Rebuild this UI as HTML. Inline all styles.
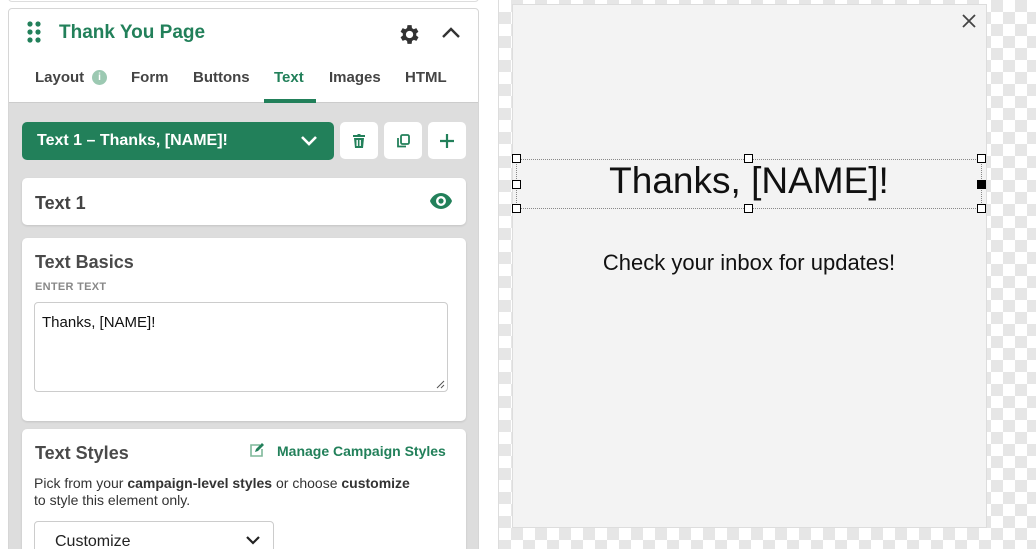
<!DOCTYPE html>
<html><head><style>
*{box-sizing:border-box;margin:0;padding:0}
html,body{width:1036px;height:549px;overflow:hidden}
body{background:#fff;font-family:"Liberation Sans",sans-serif;position:relative}
.abs{position:absolute}
.right{left:498px;top:0;width:538px;height:549px;border-left:1px solid #ddd;
background-color:#fff;background-image:linear-gradient(45deg,#e6e6e6 25%,transparent 25%,transparent 75%,#e6e6e6 75%),linear-gradient(45deg,#e6e6e6 25%,transparent 25%,transparent 75%,#e6e6e6 75%);background-size:24px 24px;background-position:0 0,12px 12px}
.pop{left:512px;top:4px;width:475px;height:524px;background:#f3f3f3;border:1px solid #ddd}
.h{width:9px;height:9px;border:1px solid #000;background:#fff}
.card{background:#fff;border-radius:5px;box-shadow:0 1px 2px rgba(0,0,0,.12)}
.tab{top:69px;font-size:15px;font-weight:bold;color:#444}
.ib{background:#fff;border-radius:5px;width:38px;height:37px;display:flex;align-items:center;justify-content:center}
</style></head><body>
<div class="abs" style="left:8px;top:-10px;width:471px;height:12px;border:1px solid #ddd;border-radius:4px"></div>
<div class="abs" style="left:8px;top:8px;width:471px;height:545px;border:1px solid #d6d6d6;border-radius:4px;background:#ddd;overflow:hidden">
 <div class="abs" style="left:0;top:0;width:471px;height:94px;background:#fff;border-bottom:1px solid #ccc"></div>
</div>
<svg class="abs" style="left:27px;top:21px" width="14" height="22"><g fill="#22805a"><circle cx="3" cy="3" r="2.6"/><circle cx="11" cy="3" r="2.6"/><circle cx="3" cy="11" r="2.6"/><circle cx="11" cy="11" r="2.6"/><circle cx="3" cy="19" r="2.6"/><circle cx="11" cy="19" r="2.6"/></g></svg>
<div class="abs" style="left:59px;top:22px;font-size:19px;font-weight:bold;color:#22805a">Thank You Page</div>
<svg class="abs" style="left:396px;top:22px" width="25" height="25" viewBox="0 0 24 24"><path fill="#333" d="M19.4 13a7.5 7.5 0 000-2l2.1-1.6-2-3.5-2.5 1a7 7 0 00-1.7-1L15 3h-4l-.4 2.9a7 7 0 00-1.7 1l-2.5-1-2 3.5L6.6 11a7.5 7.5 0 000 2l-2.2 1.6 2 3.5 2.5-1a7 7 0 001.7 1L11 21h4l.4-2.9a7 7 0 001.7-1l2.5 1 2-3.5zM13 15.5a3.5 3.5 0 110-7 3.5 3.5 0 010 7z"/></svg>
<svg class="abs" style="left:441px;top:25px" width="20" height="14"><path d="M2 12L10 4l8 8" stroke="#333" stroke-width="2.4" fill="none"/></svg>
<div class="abs tab" style="left:35px">Layout</div>
<div class="abs" style="left:92px;top:70px;width:15px;height:15px;border-radius:50%;background:#9cc9b2;color:#fff;font-size:10px;font-weight:bold;text-align:center;line-height:15px">i</div>
<div class="abs tab" style="left:131px">Form</div>
<div class="abs tab" style="left:193px">Buttons</div>
<div class="abs tab" style="left:274px;color:#22805a">Text</div>
<div class="abs" style="left:264px;top:99px;width:52px;height:4px;background:#22805a"></div>
<div class="abs tab" style="left:329px">Images</div>
<div class="abs tab" style="left:405px">HTML</div>

<div class="abs" style="left:22px;top:122px;width:312px;height:38px;background:#22805a;border-radius:5px;color:#fff;font-size:16px;font-weight:bold;padding:10px 0 0 15px">Text 1 – Thanks, [NAME]!</div>
<svg class="abs" style="left:300px;top:135px" width="18" height="12"><path d="M2 2l7 7 7-7" stroke="#fff" stroke-width="2.6" fill="none"/></svg>
<div class="abs ib" style="left:340px;top:122px"><svg width="14" height="16" viewBox="0 0 14 16"><path fill="#22805a" d="M1 2h4l1-1h2l1 1h4v2H1zM2 5h10l-1 10H3zm2.5 2v6h1.4V7zm3 0v6h1.4V7z"/></svg></div>
<div class="abs ib" style="left:384px;top:122px"><svg width="16" height="16" viewBox="0 0 16 16" fill="none" stroke="#22805a" stroke-width="1.8"><rect x="6" y="2" width="8" height="9" rx="1.5"/><path d="M3 5v8.5h8"/></svg></div>
<div class="abs ib" style="left:428px;top:122px"><svg width="14" height="14"><path d="M7 0v14M0 7h14" stroke="#22805a" stroke-width="2.2"/></svg></div>

<div class="abs card" style="left:22px;top:178px;width:444px;height:47px"></div>
<div class="abs" style="left:35px;top:193px;font-size:18px;font-weight:bold;color:#444">Text 1</div>
<svg class="abs" style="left:429px;top:192px" width="24" height="18" viewBox="0 0 24 18"><path fill="#22805a" d="M12 1C6 1 2 6 1 9c1 3 5 8 11 8s10-5 11-8c-1-3-5-8-11-8zm0 13a5 5 0 110-10 5 5 0 010 10z"/><circle cx="12" cy="9" r="2.6" fill="#22805a"/></svg>

<div class="abs card" style="left:22px;top:238px;width:444px;height:183px"></div>
<div class="abs" style="left:35px;top:252px;font-size:18px;font-weight:bold;color:#4a4a4a">Text Basics</div>
<div class="abs" style="left:35px;top:281px;font-size:11px;font-weight:bold;color:#888;letter-spacing:.3px">ENTER TEXT</div>
<div class="abs" style="left:34px;top:302px;width:414px;height:90px;border:1px solid #ccc;border-radius:4px;padding:11px 7px;font-size:15px;color:#111">Thanks, [NAME]!</div>
<svg class="abs" style="left:436px;top:380px" width="9" height="9"><path d="M1 8L8 1M5 8L8 5" stroke="#555" stroke-width="1"/></svg>

<div class="abs card" style="left:22px;top:429px;width:444px;height:140px"></div>
<div class="abs" style="left:35px;top:443px;font-size:18px;font-weight:bold;color:#4a4a4a">Text Styles</div>
<svg class="abs" style="left:249px;top:442px" width="17" height="16" viewBox="0 0 17 16"><path d="M11 3H2v11h11V7" stroke="#7fb89a" stroke-width="1.6" fill="none"/><path d="M6 10l1-3 6-6 2 2-6 6z" fill="#22805a"/></svg>
<div class="abs" style="left:277px;top:443px;font-size:14px;font-weight:bold;color:#22805a">Manage Campaign Styles</div>
<div class="abs" style="left:34px;top:475px;font-size:14px;color:#333;line-height:17px">Pick from your <b>campaign-level styles</b> or choose <b>customize</b><br>to style this element only.</div>
<div class="abs" style="left:34px;top:521px;width:240px;height:40px;border:1px solid #ccc;border-radius:4px;padding:11px 0 0 20px;font-size:16px;color:#222">Customize</div>
<svg class="abs" style="left:246px;top:535px" width="14" height="10"><path d="M1 2l6 6 6-6" stroke="#222" stroke-width="2.2" fill="none"/></svg>

<div class="abs right"></div>
<div class="abs pop"></div>
<svg class="abs" style="left:962px;top:14px" width="14" height="14"><path d="M1 1l12 12M13 1L1 13" stroke="#444" stroke-width="1.8"/></svg>
<div class="abs" style="left:516px;top:159px;width:466px;height:50px;border-top:1px dotted #888;border-bottom:1px dotted #888"></div>
<div class="abs" style="left:516px;top:159px;width:1px;height:50px;border-left:1px dotted #888"></div>
<div class="abs" style="left:981px;top:159px;width:1px;height:50px;border-left:1px dotted #888"></div>
<div class="abs" style="left:512px;top:161px;width:474px;text-align:center;font-size:37px;color:#111;line-height:40px">Thanks, [NAME]!</div>
<div class="abs h" style="left:512px;top:154px"></div>
<div class="abs h" style="left:744px;top:154px"></div>
<div class="abs h" style="left:977px;top:154px"></div>
<div class="abs h" style="left:512px;top:180px"></div>
<div class="abs h" style="left:977px;top:180px;background:#000"></div>
<div class="abs h" style="left:512px;top:204px"></div>
<div class="abs h" style="left:744px;top:204px"></div>
<div class="abs h" style="left:977px;top:204px"></div>
<div class="abs" style="left:512px;top:250px;width:474px;text-align:center;font-size:22px;color:#111">Check your inbox for updates!</div>
</body></html>
